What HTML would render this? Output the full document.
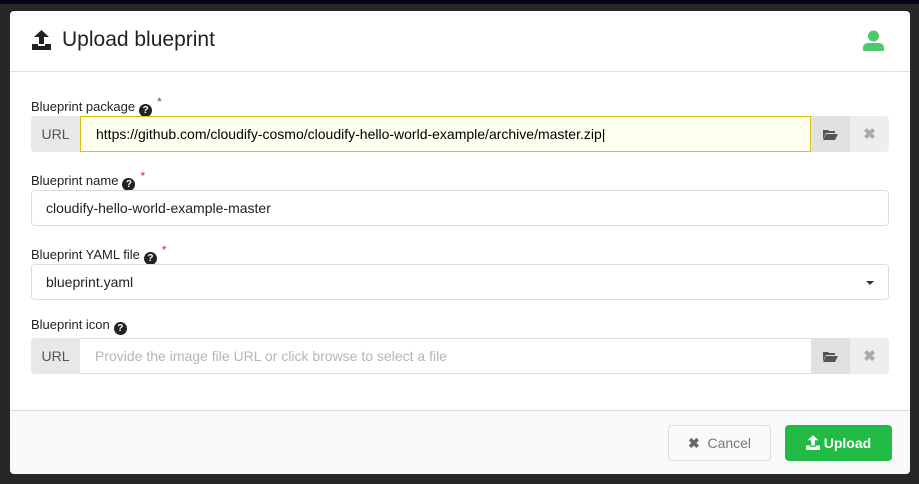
<!DOCTYPE html>
<html><head><style>
*{box-sizing:border-box;margin:0;padding:0}
body{width:919px;height:484px;background:#272727;font-family:"Liberation Sans",sans-serif;position:relative;overflow:hidden}
.top{position:absolute;left:0;top:0;width:919px;height:4px;background:#05051a}
.modal{position:absolute;left:10px;top:11px;width:900px;height:463px;background:#fff;border-radius:4px;overflow:hidden}
.hdr{height:61px;border-bottom:1px solid #e0e0e0;position:relative}
.hdr h1{position:absolute;left:52px;top:17px;font-size:21px;font-weight:normal;color:#222}
.lbl{position:absolute;left:21px;font-size:13px;color:#222}
.lbl .q{display:inline-block;width:13px;height:13px;border-radius:50%;background:#222;color:#fff;font-size:10px;font-weight:bold;text-align:center;line-height:13px;vertical-align:-2px;margin-left:4px}
.lbl .s{color:#db2828;font-size:12px;vertical-align:5px;margin-left:5px}
.in{position:absolute;left:21px;width:858px;height:36px;border:1px solid #ddd;border-radius:4px;font-size:14px;color:#222;line-height:34px;padding-left:14px}
.grp{position:absolute;left:21px;width:858px;height:36px;display:flex;font-size:14px}
.grp .u{width:49px;background:#e8e8e8;color:#555;text-align:center;line-height:36px;border-radius:4px 0 0 4px}
.grp .f{flex:1;line-height:34px;padding-left:15px;border:1px solid #ddd;border-left:none;border-right:none}
.grp .b1{width:39px;background:#e0e1e2;display:flex;align-items:center;justify-content:center}
.grp .b2{width:39px;background:#eee;color:#aaa;display:flex;align-items:center;justify-content:center;border-radius:0 4px 4px 0;font-weight:bold;font-size:15px}
.ftr{position:absolute;left:0;top:399px;width:900px;height:64px;background:#f9fafb;border-top:1px solid #ddd}
</style></head><body>
<div class="top"></div>
<div class="modal">
 <div class="hdr">
  <svg style="position:absolute;left:22px;top:19px" width="19" height="20" viewBox="0 0 19 20"><path d="M9.5 0L2 7h5v7h5V7h5z" fill="#222"/><path d="M0 14h6v2h7v-2h6v6H0z" fill="#222"/></svg>
  <h1>Upload blueprint</h1>
  <svg style="position:absolute;left:853px;top:19px" width="21" height="21" viewBox="0 0 21 21"><circle cx="10.5" cy="6" r="5.5" fill="#4cca6c"/><path d="M0 21v-3c0-4 3-5 6-5h9c3 0 6 1 6 5v3z" fill="#4cca6c"/></svg>
 </div>
 <div class="lbl" style="top:84px">Blueprint package<span class="q">?</span><span class="s">*</span></div>
 <div class="grp" style="top:105px"><div class="u">URL</div><div class="f" style="background:#fffff0;border:1px solid #d9c20b">https://github.com/cloudify-cosmo/cloudify-hello-world-example/archive/master.zip|</div><div class="b1"><svg width="15" height="11" viewBox="0 0 15 11"><path d="M0 1h5l1 1h6v2H3L0 10z M3 5h12l-3 6H0z" fill="#555"/></svg></div><div class="b2">✖</div></div>
 <div class="lbl" style="top:158px">Blueprint name<span class="q">?</span><span class="s">*</span></div>
 <div class="in" style="top:179px">cloudify-hello-world-example-master</div>
 <div class="lbl" style="top:232px">Blueprint YAML file<span class="q">?</span><span class="s">*</span></div>
 <div class="in" style="top:253px">blueprint.yaml<span style="position:absolute;right:14px;top:16px;border:4px solid transparent;border-top:4px solid #333"></span></div>
 <div class="lbl" style="top:306px">Blueprint icon<span class="q">?</span></div>
 <div class="grp" style="top:327px"><div class="u">URL</div><div class="f" style="color:#b5b5b5">Provide the image file URL or click browse to select a file</div><div class="b1"><svg width="15" height="11" viewBox="0 0 15 11"><path d="M0 1h5l1 1h6v2H3L0 10z M3 5h12l-3 6H0z" fill="#555"/></svg></div><div class="b2">✖</div></div>
 <div class="ftr">
  <div style="position:absolute;left:658px;top:14px;width:103px;height:36px;border:1px solid #ddd;border-radius:4px;background:#f9fafb;color:#777;font-size:14px;line-height:34px;text-align:center"><b style="color:#666">✖</b>&nbsp; Cancel</div>
  <div style="position:absolute;left:775px;top:14px;width:107px;height:36px;border-radius:4px;background:#21ba45;color:#fff;font-size:14px;font-weight:bold;line-height:36px;text-align:center"><svg width="14" height="15" viewBox="0 0 19 20" style="vertical-align:-2px"><path d="M9.5 0L2 7h5v7h5V7h5z" fill="#fff"/><path d="M0 14h6v2h7v-2h6v6H0z" fill="#fff"/></svg> Upload</div>
 </div>
</div>
</body></html>
